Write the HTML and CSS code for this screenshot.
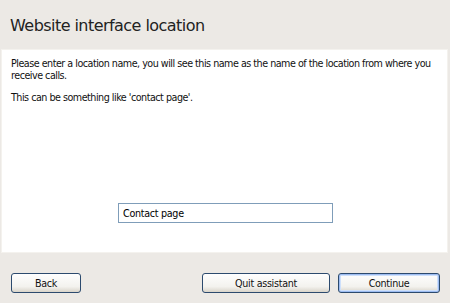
FILE: index.html
```html
<!DOCTYPE html>
<html lang="en">
<head>
  <meta charset="UTF-8">
  <title>Website interface location</title>
  <link rel="stylesheet" href="styles.css">
</head>
<body>

<div class="wizard">
  <div class="header">
    <h1>Website interface location</h1>
  </div>

  <div class="panel">
    <p>Please enter a location name, you will see this name as the name of the location from where you receive calls.</p>
    <p>This can be something like 'contact page'.</p>
    <div class="field-row">
      <input type="text" class="field" value="Contact page">
    </div>
  </div>

  <div class="footer">
    <button type="button" class="btn btn-back">Back</button>
    <div class="spacer"></div>
    <button type="button" class="btn btn-quit">Quit assistant</button>
    <button type="button" class="btn btn-next">Continue</button>
  </div>
</div>

</body>
</html>
```

FILE: styles.css
```css
html, body {
  margin: 0;
  padding: 0;
  background: #ece9e5;
}

body {
  font-family: Tahoma, "DejaVu Sans", sans-serif;
  color: #000;
  width: 450px;
  height: 303px;
  overflow: hidden;
}

.wizard {
  display: flex;
  flex-direction: column;
  height: 303px;
}

.header {
  height: 49px;
  box-sizing: border-box;
  padding: 16px 10px 0;
}

h1 {
  margin: 0;
  font-family: "DejaVu Sans", sans-serif;
  font-weight: normal;
  font-size: 16px;
  color: #222;
  letter-spacing: -0.55px;
}

.panel {
  height: 204px;
  box-sizing: border-box;
  margin: 0 2px 0 1px;
  padding: 8px 4px 0 9px;
  background: #fff;
  border: 1px solid #f4f2ee;
  font-size: 9.6px;
  line-height: 12px;
  display: flex;
  flex-direction: column;
}

.panel p {
  margin: 0 0 10px;
  letter-spacing: -0.5px;
  color: #111;
}

.field-row {
  margin-top: auto;
  margin-bottom: 29px;
  padding-left: 107px;
}

.field {
  width: 215px;
  height: 20px;
  box-sizing: border-box;
  border: 1px solid #7f9db9;
  padding: 0 4px;
  font-family: "DejaVu Sans", sans-serif;
  font-size: 9.6px;
  letter-spacing: -0.3px;
  color: #000;
  outline: none;
}

.footer {
  flex: 1;
  display: flex;
  align-items: flex-start;
  padding: 20px 10px 0 11px;
  gap: 8px;
}

.spacer {
  flex: 1;
}

.btn {
  height: 20px;
  box-sizing: border-box;
  border: 1px solid #2c4a6e;
  border-radius: 3px;
  background: linear-gradient(#fefefe, #f3f2ee 70%, #d9d4ca);
  font-family: "DejaVu Sans", sans-serif;
  font-size: 9.6px;
  letter-spacing: -0.3px;
  color: #111;
  padding: 0;
}

.btn-back {
  width: 70px;
}

.btn-quit {
  width: 128px;
}

.btn-next {
  width: 102px;
  box-shadow: inset 0 0 0 1px #9dbcf1, inset 0 0 0 2px #cee0fb;
}
```
